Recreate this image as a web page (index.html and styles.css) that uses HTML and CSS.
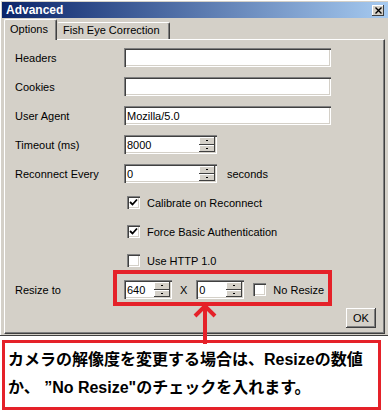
FILE: index.html
```html
<!DOCTYPE html>
<html lang="ja">
<head>
<meta charset="utf-8">
<title>Advanced</title>
<link rel="stylesheet" href="styles.css">
</head>
<body>
<div class="window">
  <div class="titlebar">
    <span class="title">Advanced</span>
    <span class="close"><svg width="7" height="7" viewBox="0 0 7 7"><path d="M0.5 0.5 L6.5 6.5 M6.5 0.5 L0.5 6.5" stroke="#000" stroke-width="1.4"/></svg></span>
  </div>
  <div class="tabs">
    <div class="tab active">Options</div>
    <div class="tab fish">Fish Eye Correction</div>
  </div>
  <div class="panel">
    <div class="form">
      <div class="label">Headers</div>
      <div class="field"><div class="input wide"></div></div>

      <div class="label">Cookies</div>
      <div class="field"><div class="input wide"></div></div>

      <div class="label">User Agent</div>
      <div class="field"><div class="input wide">Mozilla/5.0</div></div>

      <div class="label">Timeout (ms)</div>
      <div class="field"><div class="input spin"><span>8000</span><span class="spin-btns"><span></span><span></span></span></div></div>

      <div class="label">Reconnect Every</div>
      <div class="field"><div class="input spin"><span>0</span><span class="spin-btns"><span></span><span></span></span></div><span class="unit">seconds</span></div>

      <div class="label"></div>
      <div class="field"><div class="check"><span class="box"><svg width="9" height="9" viewBox="0 0 9 9"><polyline points="1,4 3.5,6.5 8,1.5" fill="none" stroke="#000" stroke-width="1.8"/></svg></span><span>Calibrate on Reconnect</span></div></div>

      <div class="label"></div>
      <div class="field"><div class="check"><span class="box"><svg width="9" height="9" viewBox="0 0 9 9"><polyline points="1,4 3.5,6.5 8,1.5" fill="none" stroke="#000" stroke-width="1.8"/></svg></span><span>Force Basic Authentication</span></div></div>

      <div class="label"></div>
      <div class="field"><div class="check"><span class="box"></span><span>Use HTTP 1.0</span></div></div>

      <div class="label">Resize to</div>
      <div class="field">
        <div class="input spin small"><span>640</span><span class="spin-btns"><span></span><span></span></span></div>
        <span class="times">X</span>
        <div class="input spin small"><span>0</span><span class="spin-btns"><span></span><span></span></span></div>
        <div class="check resize-check"><span class="box"></span><span>No Resize</span></div>
      </div>
    </div>
    <div class="footer"><div class="button">OK</div></div>
  </div>
</div>
<div class="note">
  <div>カメラの解像度を変更する場合は、Resizeの数値</div>
  <div>か、 ”No Resize"のチェックを入れます。</div>
</div>
<div class="mark-box"></div>
<svg class="mark-arrow" width="26" height="42" viewBox="0 0 26 42">
  <line x1="12" y1="5" x2="12" y2="42" stroke="#e52129" stroke-width="4"/>
  <polyline points="2,14 12,4 22,14" fill="none" stroke="#e52129" stroke-width="4"/>
</svg>
</body>
</html>
```

FILE: styles.css
```css
* { box-sizing: border-box; }

body {
  margin: 0;
  width: 388px;
  height: 416px;
  background: #fff;
  position: relative;
  overflow: hidden;
  font-family: "Liberation Sans", Arial, sans-serif;
  font-size: 11px;
  color: #000;
}

.window {
  height: 336px;
  background: #d4d0c8;
  padding: 2px 0 0 2px;
  display: flex;
  flex-direction: column;
  box-shadow: inset 1px 1px 0 #fff;
  border-bottom: 1px solid #404040;
}

.titlebar {
  height: 16px;
  flex: none;
  background: linear-gradient(to right, #0a246a, #a6caf0);
  display: flex;
  align-items: center;
  justify-content: space-between;
  padding: 0 4px 0 4px;
}

.title {
  color: #fff;
  font-weight: bold;
  font-size: 12px;
}

.close {
  width: 12px;
  height: 11px;
  margin-top: 1px;
  background: #d4d0c8;
  box-shadow: inset -1px -1px 0 #404040, inset 1px 1px 0 #fff;
  display: flex;
  align-items: center;
  justify-content: center;
}

.tabs {
  height: 21px;
  flex: none;
  display: flex;
  align-items: flex-end;
  margin-left: 2px;
  position: relative;
  z-index: 1;
}

.tab {
  height: 17px;
  width: 113px;
  padding: 0 0 0 5px;
  line-height: 15px;
  border: 1px solid;
  border-color: #fff #404040 transparent #fff;
  border-bottom: none;
  box-shadow: inset -1px 0 0 #808080;
  border-radius: 2px 2px 0 0;
  background: #d4d0c8;
}

.tab.active {
  width: 53px;
  height: 21px;
  margin-bottom: -1px;
  line-height: 18px;
}

.tab.fish {
  border-left-color: transparent;
}

.panel {
  flex: 1;
  margin: 0 3px 1px 2px;
  border: 1px solid;
  border-color: #fff #404040 #404040 #fff;
  box-shadow: inset -1px -1px 0 #808080;
  padding: 3px 8px 0 10px;
}

.form {
  display: grid;
  grid-template-columns: 109px 1fr;
  grid-auto-rows: 29px;
  align-items: center;
}

.field {
  display: flex;
  align-items: center;
}

.input {
  height: 19px;
  background: #fff;
  box-shadow: inset 1px 1px 0 #808080, inset 2px 2px 0 #404040,
              inset -1px -1px 0 #fff, inset -2px -2px 0 #d4d0c8;
  padding: 0 2px 0 3px;
  display: flex;
  align-items: center;
  white-space: nowrap;
}

.input.wide { width: 207px; }

.spin {
  width: 93px;
  justify-content: space-between;
}

.spin.small { width: 48px; }

.spin-btns {
  width: 16px;
  height: 15px;
  display: flex;
  flex-direction: column;
}

.spin-btns span {
  flex: 1;
  background: #d4d0c8;
  box-shadow: inset -1px -1px 0 #404040, inset 1px 1px 0 #fff;
  display: flex;
  align-items: center;
  justify-content: center;
}

.spin-btns span::after {
  content: "";
  width: 2px;
  height: 1px;
  background: #000;
}

.unit { margin-left: 10px; }

.check {
  display: flex;
  align-items: center;
  gap: 7px;
  margin-left: 3px;
}

.box {
  width: 13px;
  height: 13px;
  background: #fff;
  box-shadow: inset 1px 1px 0 #808080, inset 2px 2px 0 #404040,
              inset -1px -1px 0 #fff, inset -2px -2px 0 #d4d0c8;
  display: flex;
  align-items: center;
  justify-content: center;
}

.times { margin: 0 9px 0 8px; }

.resize-check { margin-left: 9px; }

.footer {
  display: flex;
  justify-content: flex-end;
  margin-top: 4px;
}

.button {
  width: 30px;
  height: 20px;
  background: #d4d0c8;
  box-shadow: inset -1px -1px 0 #404040, inset 1px 1px 0 #fff,
              inset -2px -2px 0 #808080;
  display: flex;
  align-items: center;
  justify-content: center;
}

.note {
  margin: 4px 0 0 2px;
  width: 379px;
  height: 70px;
  border: 3px solid #e52129;
  background: #fff;
  padding: 3px 0 0 3px;
  font-family: "Liberation Sans", "Noto Sans CJK JP", sans-serif;
  font-weight: bold;
  font-size: 16px;
  line-height: 28px;
  white-space: nowrap;
}

.mark-box {
  position: absolute;
  left: 113px;
  top: 270px;
  width: 219px;
  height: 36px;
  border: 4px solid #e52129;
}

.mark-arrow {
  position: absolute;
  left: 193px;
  top: 302px;
}
```
